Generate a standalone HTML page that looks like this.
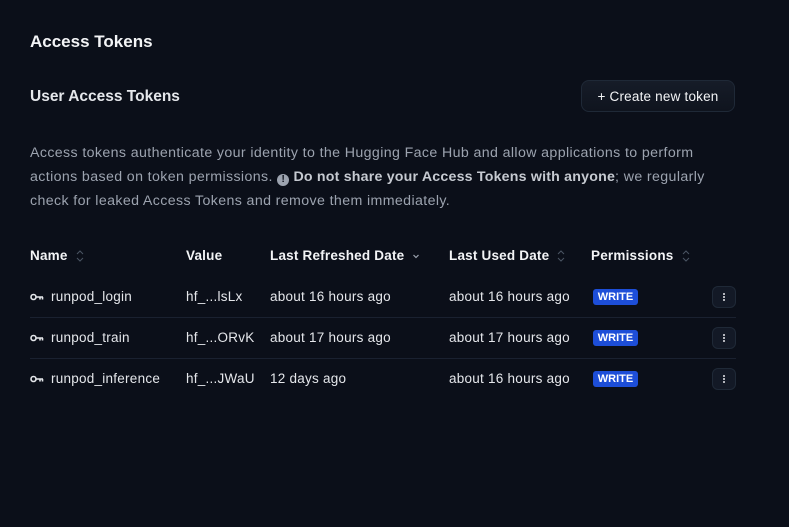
<!DOCTYPE html>
<html><head><meta charset="utf-8"><style>
body{margin:0;width:789px;height:527px;background:#0b0f19;font-family:"Liberation Sans",sans-serif;color:#e5e7eb;position:relative;overflow:hidden}
.a{position:absolute;white-space:nowrap}
h1{position:absolute;left:30px;top:32px;margin:0;font-size:17px;font-weight:bold;color:#f3f4f6}
h2{position:absolute;left:30px;top:88px;margin:0;font-size:15.5px;font-weight:bold;color:#e5e7eb}
.btn{position:absolute;left:581px;top:80px;width:154px;height:32px;border:1px solid #1f2937;border-radius:8px;background:linear-gradient(#161c28,#0f141e);box-sizing:border-box;font-size:13.5px;color:#f3f4f6;text-align:center;line-height:31px;letter-spacing:.2px}
.desc{position:absolute;left:30px;top:141px;font-size:14.2px;letter-spacing:.38px;line-height:24px;color:#9ca3af;white-space:nowrap}
.desc b{color:#c6cad1;letter-spacing:.2px}
.hd{font-size:13.5px;font-weight:bold;color:#f3f4f6;top:248px;letter-spacing:.2px}
.c{font-size:13.5px;color:#e5e7eb;letter-spacing:.25px}
.sort{display:inline-block;vertical-align:middle;margin-left:8px;width:8px;height:12px}
.line{position:absolute;left:30px;width:706px;height:1px;background:#1a2130}
.w{position:absolute;left:593px;width:45px;height:16px;background:#1d4ed8;border-radius:3px;font-size:11px;font-weight:bold;color:#fff;text-align:center;line-height:16px}
.m{position:absolute;left:712px;width:24px;height:22px;border:1px solid #1f2937;border-radius:6px;background:#131926;box-sizing:border-box}
.m::after{content:"";position:absolute;left:10px;top:6px;width:2px;height:2px;background:#e5e7eb;box-shadow:0 3px #e5e7eb,0 6px #e5e7eb;border-radius:1px}
.key{display:inline-block;vertical-align:middle;margin-right:7px}
</style></head><body>
<h1>Access Tokens</h1>
<h2>User Access Tokens</h2>
<div class="btn">+ Create new token</div>
<div class="desc">Access tokens authenticate your identity to the Hugging Face Hub and allow applications to perform<br>actions based on token permissions. <span style="display:inline-block;width:12px;height:12px;border-radius:50%;background:#9ca3af;color:#0b0f19;font-size:10px;line-height:12px;text-align:center;font-weight:bold;vertical-align:-1px;letter-spacing:0">!</span> <b>Do not share your Access Tokens with anyone</b>; we regularly<br>check for leaked Access Tokens and remove them immediately.</div>

<div class="a hd" style="left:30px">Name<svg class="sort" viewBox="0 0 8 12"><path d="M1 4l3-3 3 3M1 8l3 3 3-3" fill="none" stroke="#4b5563" stroke-width="1"/></svg></div>
<div class="a hd" style="left:186px">Value</div>
<div class="a hd" style="left:270px">Last Refreshed Date<svg class="sort" viewBox="0 0 8 12"><path d="M1.5 5l2.5 2.5 2.5-2.5" fill="none" stroke="#9ca3af" stroke-width="1.2"/></svg></div>
<div class="a hd" style="left:449px">Last Used Date<svg class="sort" viewBox="0 0 8 12"><path d="M1 4l3-3 3 3M1 8l3 3 3-3" fill="none" stroke="#4b5563" stroke-width="1"/></svg></div>
<div class="a hd" style="left:591px">Permissions<svg class="sort" viewBox="0 0 8 12"><path d="M1 4l3-3 3 3M1 8l3 3 3-3" fill="none" stroke="#4b5563" stroke-width="1"/></svg></div>

<div class="a c" style="left:30px;top:289px"><svg class="key" width="14" height="8" viewBox="0 0 14 8"><circle cx="3.5" cy="4" r="2.5" fill="none" stroke="#e5e7eb" stroke-width="1.6"/><path d="M6 4h7M10 4v2.5M12.5 4v2.5" stroke="#e5e7eb" stroke-width="1.6"/></svg>runpod_login</div>
<div class="a c" style="left:186px;top:289px">hf_...lsLx</div>
<div class="a c" style="left:270px;top:289px">about 16 hours ago</div>
<div class="a c" style="left:449px;top:289px">about 16 hours ago</div>
<div class="w" style="top:289px">WRITE</div>
<div class="m" style="top:286px"></div>
<div class="line" style="top:317px"></div>

<div class="a c" style="left:30px;top:330px"><svg class="key" width="14" height="8" viewBox="0 0 14 8"><circle cx="3.5" cy="4" r="2.5" fill="none" stroke="#e5e7eb" stroke-width="1.6"/><path d="M6 4h7M10 4v2.5M12.5 4v2.5" stroke="#e5e7eb" stroke-width="1.6"/></svg>runpod_train</div>
<div class="a c" style="left:186px;top:330px">hf_...ORvK</div>
<div class="a c" style="left:270px;top:330px">about 17 hours ago</div>
<div class="a c" style="left:449px;top:330px">about 17 hours ago</div>
<div class="w" style="top:330px">WRITE</div>
<div class="m" style="top:327px"></div>
<div class="line" style="top:358px"></div>

<div class="a c" style="left:30px;top:371px"><svg class="key" width="14" height="8" viewBox="0 0 14 8"><circle cx="3.5" cy="4" r="2.5" fill="none" stroke="#e5e7eb" stroke-width="1.6"/><path d="M6 4h7M10 4v2.5M12.5 4v2.5" stroke="#e5e7eb" stroke-width="1.6"/></svg>runpod_inference</div>
<div class="a c" style="left:186px;top:371px">hf_...JWaU</div>
<div class="a c" style="left:270px;top:371px">12 days ago</div>
<div class="a c" style="left:449px;top:371px">about 16 hours ago</div>
<div class="w" style="top:371px">WRITE</div>
<div class="m" style="top:368px"></div>
</body></html>
